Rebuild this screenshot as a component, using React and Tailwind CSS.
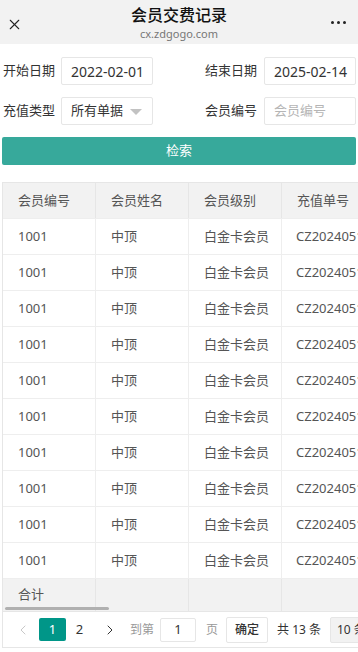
import { ChevronLeft, ChevronRight, X } from 'lucide-react'

const rows = Array.from({ length: 10 }, () => ({ id: '1001', name: '中顶', level: '白金卡会员', no: 'CZ20240510001' }))

export default function App() {
  return (
    <div
      className="w-[358px] h-[652px] overflow-hidden bg-white text-[#333]"
      style={{ fontFamily: '"Noto Sans", "Noto Sans CJK SC", sans-serif' }}
    >
      {/* top bar */}
      <div className="relative h-[44px] bg-[#f2f2f2] flex flex-col items-center justify-center">
        <X className="absolute left-[6px] top-[16px] w-[17px] h-[17px] text-[#222]" strokeWidth={1.5} />
        <div className="text-[16px] font-medium leading-[20px] text-[#111] mt-[1px]">会员交费记录</div>
        <div className="text-[11px] leading-[14px] text-[#777] mt-[2px]">cx.zdgogo.com</div>
        <div className="absolute right-[12px] top-[21px] flex gap-[3px]">
          <span className="w-[3px] h-[3px] rounded-full bg-[#222]" />
          <span className="w-[3px] h-[3px] rounded-full bg-[#222]" />
          <span className="w-[3px] h-[3px] rounded-full bg-[#222]" />
        </div>
      </div>

      {/* filter form */}
      <div className="pt-[13px] px-[2px]">
        <div className="grid grid-cols-2 gap-y-[12px] text-[13px]">
          <div className="flex items-center">
            <span className="w-[59px] pl-[1px]">开始日期</span>
            <div className="w-[92px] h-[28px] border border-[#e6e6e6] rounded-[2px] flex items-center pl-[9px] text-[14px]">2022-02-01</div>
          </div>
          <div className="flex items-center justify-end">
            <span className="mr-[7px]">结束日期</span>
            <div className="w-[92px] h-[28px] border border-[#e6e6e6] rounded-[2px] flex items-center pl-[9px] text-[14px]">2025-02-14</div>
          </div>
          <div className="flex items-center">
            <span className="w-[59px] pl-[1px]">充值类型</span>
            <div className="relative w-[92px] h-[28px] border border-[#e6e6e6] rounded-[2px] flex items-center pl-[9px]">
              所有单据
              <span className="absolute right-[10px] top-[11px] w-0 h-0 border-l-[6px] border-r-[6px] border-t-[6px] border-l-transparent border-r-transparent border-t-[#c2c2c2]" />
            </div>
          </div>
          <div className="flex items-center justify-end">
            <span className="mr-[7px]">会员编号</span>
            <div className="w-[92px] h-[28px] border border-[#e6e6e6] rounded-[2px] flex items-center pl-[9px] text-[#b5b5b5]">会员编号</div>
          </div>
        </div>
        <div className="mt-[12px] h-[28px] rounded-[2px] bg-[#37a99b] text-white text-[13px] flex items-center justify-center">检索</div>
      </div>

      {/* table */}
      <div className="relative mt-[17px] ml-[2px] overflow-hidden border-l border-t border-[#e6e6e6] text-[13px]">
        <div className="w-[420px]">
          <div className="flex h-[35px] bg-[#f2f2f2] text-[#555]">
            {['会员编号', '会员姓名', '会员级别', '充值单号'].map((h, i) => (
              <div key={i} className="w-[93px] shrink-0 border-r border-[#e6e6e6] flex items-center px-[15px] whitespace-nowrap overflow-hidden">{h}</div>
            ))}
          </div>
          {rows.map((r, i) => (
            <div key={i} className="flex h-[36px] border-t border-[#eeeeee] text-[#555] whitespace-nowrap">
              <div className="w-[93px] shrink-0 border-r border-[#eeeeee] flex items-center px-[15px]">{r.id}</div>
              <div className="w-[93px] shrink-0 border-r border-[#eeeeee] flex items-center px-[15px]">{r.name}</div>
              <div className="w-[93px] shrink-0 border-r border-[#eeeeee] flex items-center px-[15px]">{r.level}</div>
              <div className="w-[93px] shrink-0 flex items-center pl-[14px] overflow-hidden">{r.no}</div>
            </div>
          ))}
          <div className="flex h-[33px] border-t border-[#eeeeee] bg-[#f2f2f2] text-[#555]">
            <div className="w-[93px] shrink-0 border-r border-[#e6e6e6] flex items-center px-[15px]">合计</div>
            <div className="w-[93px] shrink-0 border-r border-[#e6e6e6]" />
            <div className="w-[93px] shrink-0 border-r border-[#e6e6e6]" />
            <div className="w-[93px] shrink-0" />
          </div>
        </div>
        <div className="absolute left-[2px] bottom-[1px] w-[104px] h-[3px] rounded-full bg-[#b0b0b0]" />
      </div>

      {/* pagination */}
      <div className="ml-[2px] h-[37px] border border-[#e6e6e6] border-r-0 flex items-center text-[13px] text-[#333] whitespace-nowrap overflow-hidden">
        <ChevronLeft className="shrink-0 ml-[12px] w-[16px] h-[16px] text-[#c8c8c8]" strokeWidth={1.5} />
        <div className="shrink-0 ml-[8px] w-[27px] h-[23px] rounded-[2px] bg-[#009688] text-white flex items-center justify-center">1</div>
        <div className="shrink-0 w-[27px] h-[23px] flex items-center justify-center">2</div>
        <ChevronRight className="shrink-0 ml-[9px] w-[16px] h-[16px] text-[#333]" strokeWidth={1.5} />
        <span className="shrink-0 ml-[12px] text-[12px] text-[#999]">到第</span>
        <div className="shrink-0 ml-[6px] w-[36px] h-[24px] border border-[#e6e6e6] rounded-[2px] flex items-center justify-center">1</div>
        <span className="shrink-0 ml-[10px] text-[12px] text-[#999]">页</span>
        <div className="shrink-0 ml-[8px] w-[42px] h-[26px] border border-[#e6e6e6] rounded-[2px] flex items-center justify-center text-[12px] font-medium">确定</div>
        <span className="shrink-0 ml-[9px] text-[12px]">共 13 条</span>
        <div className="shrink-0 ml-[9px] h-[26px] pl-[6px] pr-[12px] bg-[#f2f2f2] border border-[#e6e6e6] rounded-[2px] flex items-center text-[12px]">10 条/页</div>
      </div>
    </div>
  )
}
